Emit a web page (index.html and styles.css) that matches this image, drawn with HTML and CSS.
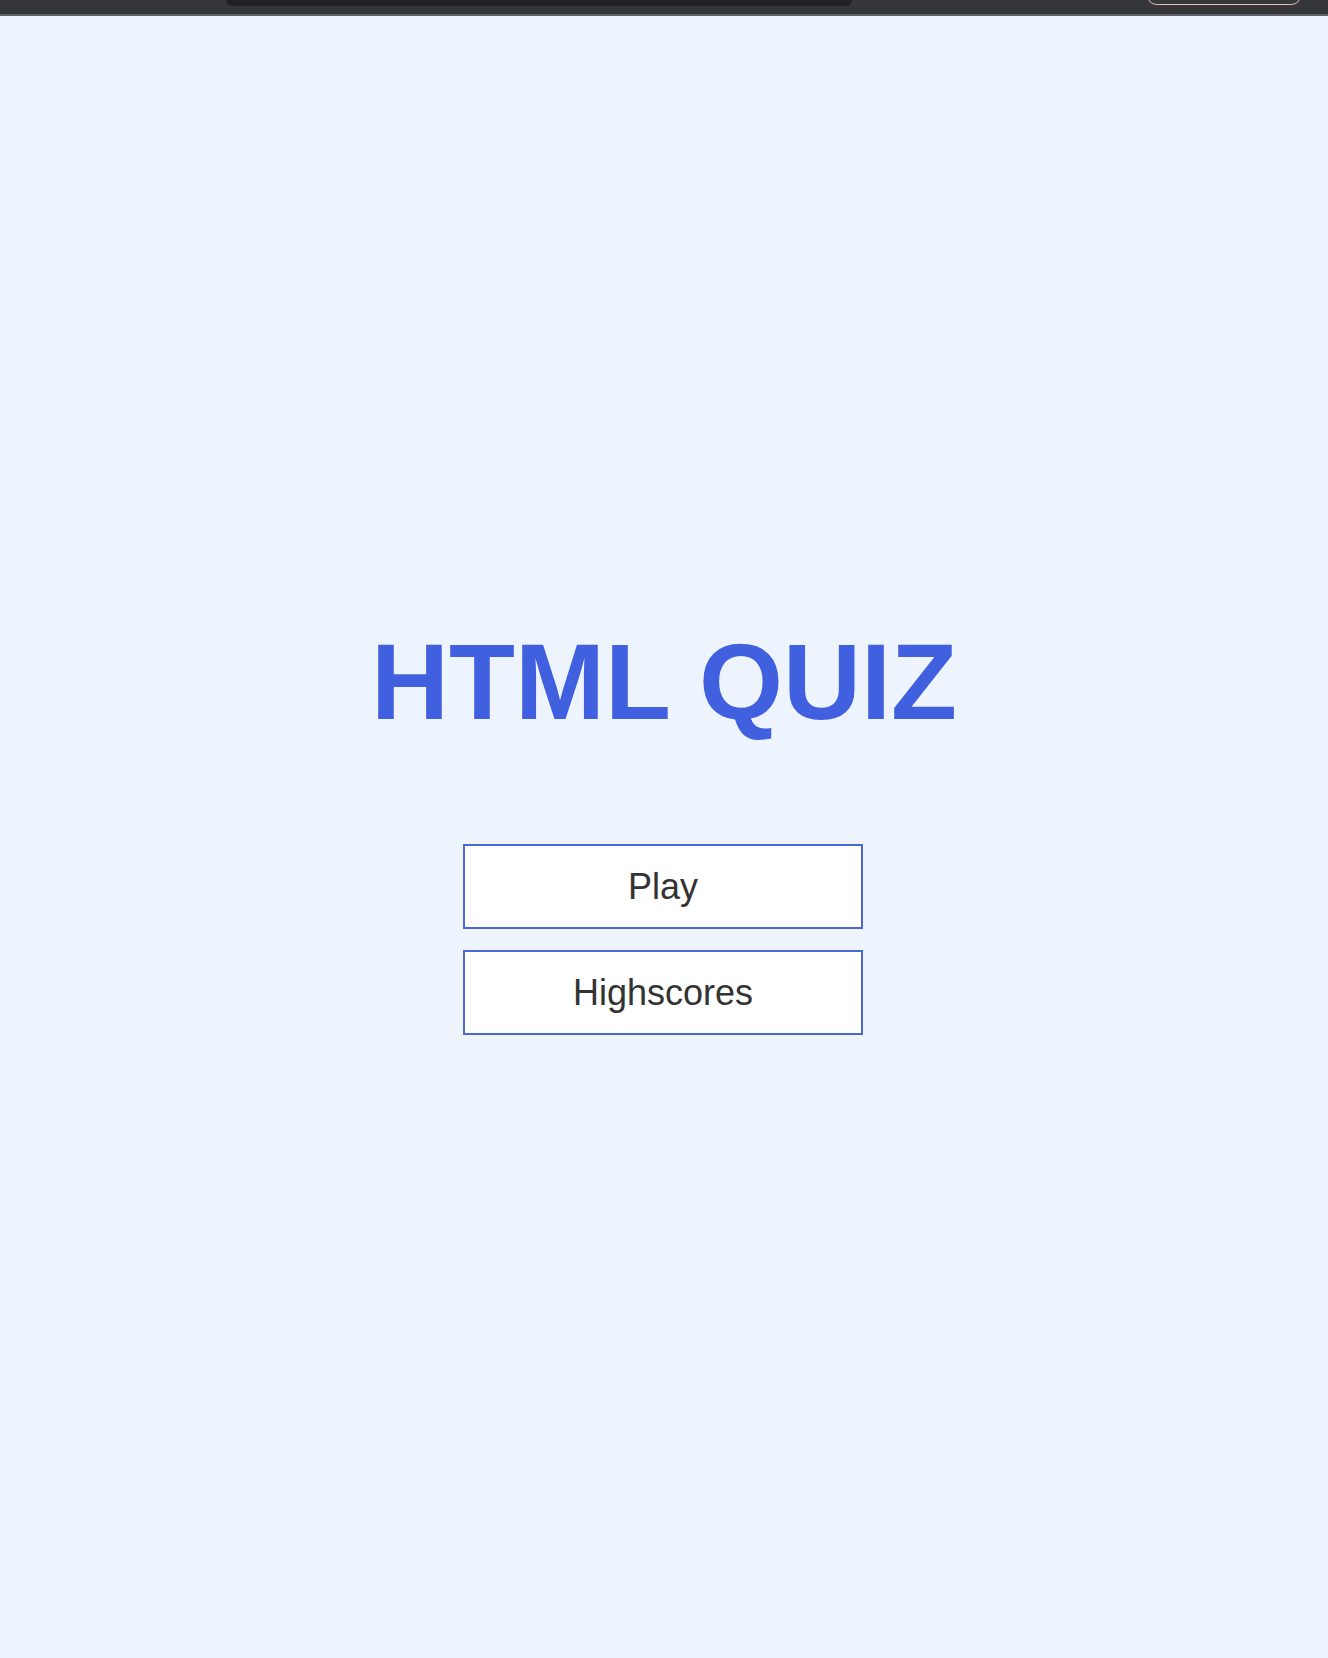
FILE: index.html
```html
<!DOCTYPE html>
<html lang="en">
<head>
<meta charset="utf-8">
<title>HTML Quiz</title>
<link rel="stylesheet" href="styles.css">
</head>
<body>
<div class="chrome">
  <div class="chrome-url"></div>
  <div class="chrome-btn"></div>
</div>
<main class="home">
  <h1 class="title">HTML QUIZ</h1>
  <div class="menu">
    <button class="menu-btn">Play</button>
    <button class="menu-btn">Highscores</button>
  </div>
</main>
</body>
</html>
```
FILE: styles.css
```css
html, body {
  margin: 0;
  padding: 0;
}
body {
  background: #edf4fe;
  font-family: "Liberation Sans", Arial, sans-serif;
  min-height: 1658px;
}
.chrome {
  height: 14px;
  background: #35363a;
  border-bottom: 2px solid #5f6368;
  display: flex;
  align-items: flex-start;
  padding-left: 226px;
  overflow: hidden;
}
.chrome-url {
  width: 626px;
  height: 6px;
  background: #202124;
  border-radius: 0 0 10px 10px;
}
.chrome-btn {
  margin-left: 295px;
  width: 152px;
  height: 17px;
  margin-top: -14px;
  border: 1.5px solid #f2b8b5;
  border-radius: 12px;
}
.home {
  display: flex;
  flex-direction: column;
  align-items: center;
  padding-top: 612px;
}
.title {
  margin: 0;
  font-size: 108px;
  line-height: 1;
  font-weight: 700;
  color: #4160e0;
}
.menu {
  margin-top: 108px;
  margin-right: 2px;
  display: flex;
  flex-direction: column;
  gap: 21px;
}
.menu-btn {
  width: 400px;
  height: 85px;
  background: #ffffff;
  border: 2px solid #4a68d4;
  font-family: "Liberation Sans", Arial, sans-serif;
  font-size: 36px;
  color: #333333;
  padding: 0;
  cursor: pointer;
}
```
